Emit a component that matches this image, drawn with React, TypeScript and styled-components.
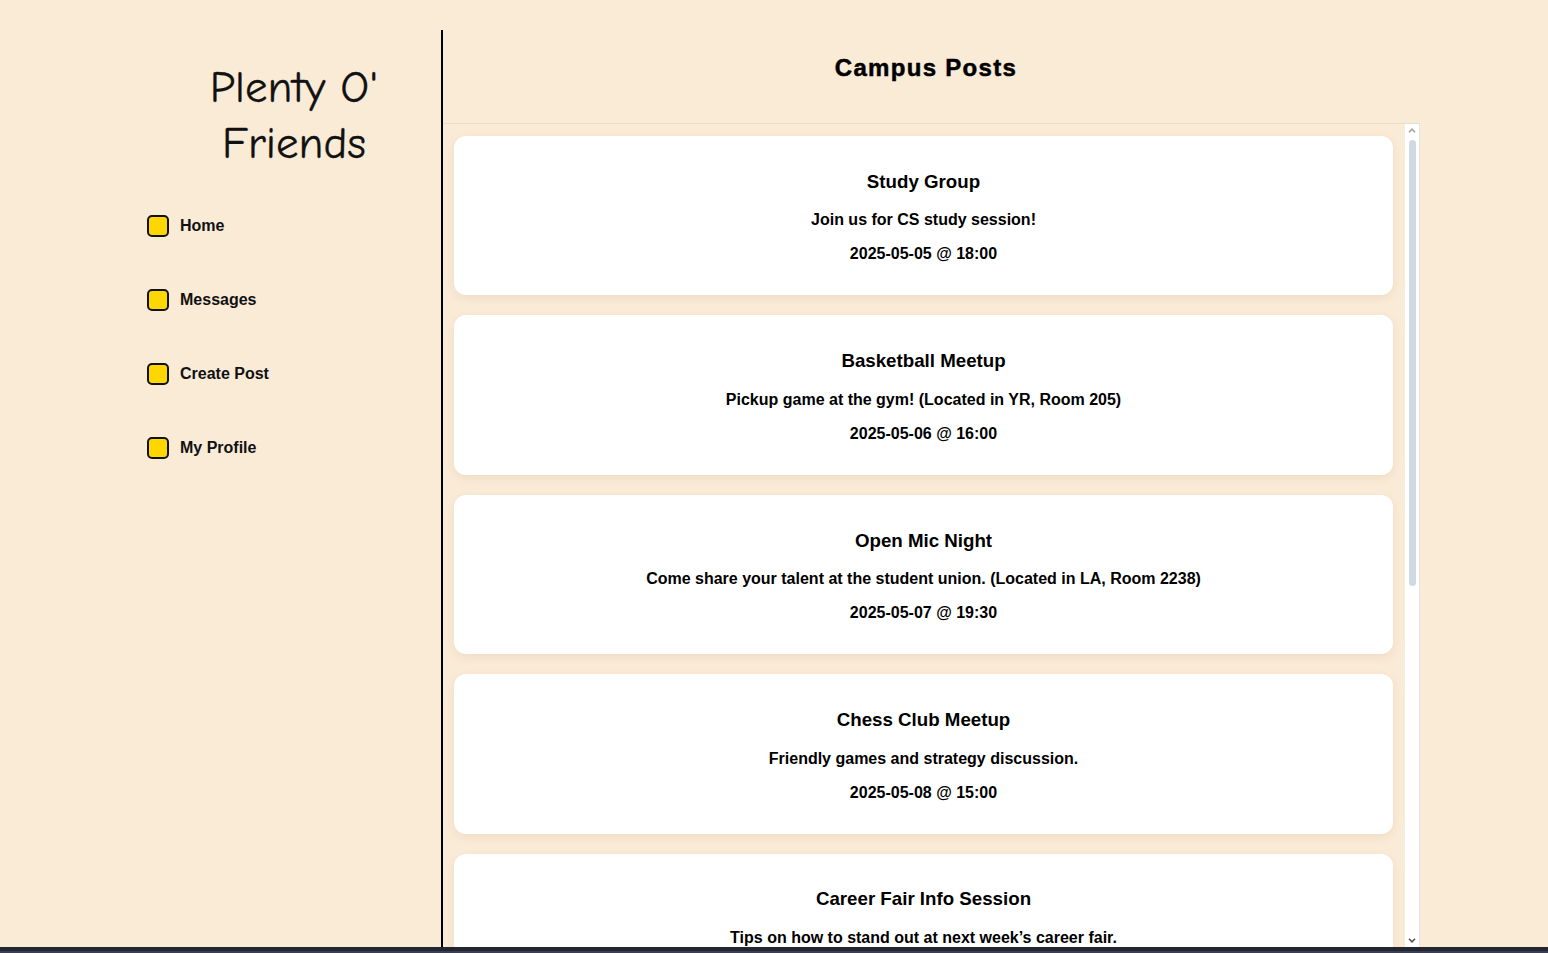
import React from "react";
import styled, { createGlobalStyle } from "styled-components";

const GlobalStyle = createGlobalStyle`
  html, body {
    margin: 0;
    padding: 0;
    height: 100%;
    overflow: hidden;
    background: #faebd7;
    font-family: "Liberation Sans", Arial, sans-serif;
    color: #000;
  }
  #root { height: 100%; }
`;

const Page = styled.div`
  height: 953px;
  display: flex;
  flex-direction: column;
`;

const Layout = styled.div`
  flex: 1;
  min-height: 0;
  display: grid;
  grid-template-columns: 443px 977px;
  padding-top: 30px;
`;

const Sidebar = styled.aside`
  border-right: 2px solid #000;
  padding-left: 147px;
  display: flex;
  flex-direction: column;
`;

const Logo = styled.h1`
  margin: 29px 0 43px;
  font-family: "Comic Sans MS", "Comic Neue", cursive;
  font-weight: 400;
  font-size: 45px;
  line-height: 56px;
  text-align: center;
  color: #111;
  -webkit-text-stroke: 0.3px #111;
`;

const Nav = styled.nav`
  display: flex;
  flex-direction: column;
  gap: 52px;
  padding-top: 1px;
`;

const NavItem = styled.a`
  display: flex;
  align-items: center;
  gap: 11px;
  height: 22px;
  font-size: 16px;
  font-weight: 700;
  color: #111;
  text-decoration: none;
  cursor: pointer;
`;

const NavIcon = styled.span`
  width: 18px;
  height: 18px;
  border: 2px solid #111;
  border-radius: 5px;
  background: #ffd700;
  flex-shrink: 0;
`;

const Main = styled.main`
  display: flex;
  flex-direction: column;
  min-height: 0;
`;

const Header = styled.header`
  height: 93px;
  padding-right: 11px;
  border-bottom: 1px solid #e2dcd3;
  display: flex;
  justify-content: center;
  align-items: flex-start;
`;

const PageTitle = styled.h2`
  margin: 24px 0 0;
  font-size: 24px;
  letter-spacing: 1.3px;
  font-weight: 900;
  -webkit-text-stroke: 0.5px #000;
  line-height: 27px;
`;

const FeedArea = styled.div`
  flex: 1;
  min-height: 0;
  display: flex;
`;

const Feed = styled.section`
  flex: 1;
  min-height: 0;
  overflow-y: scroll;
  scrollbar-width: none;
  padding: 12px 12px 12px 11px;
  &::-webkit-scrollbar {
    display: none;
  }
`;

const ScrollTrack = styled.div`
  width: 15px;
  flex-shrink: 0;
  background: #fff;
  border-right: 1px solid #e4e4e4;
  box-sizing: border-box;
  display: flex;
  flex-direction: column;
`;

const ScrollArrow = styled.div<{ $color: string }>`
  height: 13px;
  display: flex;
  align-items: center;
  justify-content: center;
  color: ${(p) => p.$color};
`;

const ScrollBody = styled.div`
  flex: 1;
  padding: 3px 3px 0 4px;
`;

const Thumb = styled.div`
  width: 7px;
  background: #cfd9e2;
  border-radius: 4px;
`;

const Card = styled.article`
  background: #fff;
  border-radius: 12px;
  box-shadow: 0 3px 10px rgba(160, 120, 60, 0.13);
  padding: 16px;
  margin-bottom: 20px;
  text-align: center;
`;

const CardTitle = styled.h3`
  margin: 18.72px 0;
  font-size: 18.72px;
  font-weight: 700;
`;

const CardText = styled.p`
  margin: 16px 0;
  font-size: 16px;
  font-weight: 700;
`;

const WindowEdge = styled.div`
  height: 6px;
  flex-shrink: 0;
  background: linear-gradient(#23252f 0 4px, #3b3d52 4px 6px);
`;

const navItems = ["Home", "Messages", "Create Post", "My Profile"];

const posts = [
  { title: "Study Group", text: "Join us for CS study session!", when: "2025-05-05 @ 18:00" },
  { title: "Basketball Meetup", text: "Pickup game at the gym! (Located in YR, Room 205)", when: "2025-05-06 @ 16:00" },
  { title: "Open Mic Night", text: "Come share your talent at the student union. (Located in LA, Room 2238)", when: "2025-05-07 @ 19:30" },
  { title: "Chess Club Meetup", text: "Friendly games and strategy discussion.", when: "2025-05-08 @ 15:00" },
  { title: "Career Fair Info Session", text: "Tips on how to stand out at next week\u2019s career fair.", when: "2025-05-09 @ 12:00" },
  { title: "Movie Night", text: "Outdoor screening on the quad. Bring a blanket!", when: "2025-05-10 @ 20:00" },
  { title: "Hiking Trip", text: "Weekend hike with the outdoors club.", when: "2025-05-11 @ 08:00" },
  { title: "Coding Hackathon", text: "Build something cool in 24 hours. (Located in ECS, Room 104)", when: "2025-05-12 @ 09:00" },
];

const Chevron = ({ up }: { up?: boolean }) => (
  <svg width="8" height="5" viewBox="0 0 8 5" fill="none">
    <path
      d={up ? "M1 4.2 L4 1.2 L7 4.2" : "M1 0.8 L4 3.8 L7 0.8"}
      stroke="currentColor"
      strokeWidth="1.6"
    />
  </svg>
);

export default function App() {
  return (
    <>
      <GlobalStyle />
      <Page>
        <Layout>
          <Sidebar>
            <Logo>
              Plenty O'
              <br />
              Friends
            </Logo>
            <Nav>
              {navItems.map((label) => (
                <NavItem key={label}>
                  <NavIcon />
                  {label}
                </NavItem>
              ))}
            </Nav>
          </Sidebar>
          <Main>
            <Header>
              <PageTitle>Campus Posts</PageTitle>
            </Header>
            <FeedArea>
              <Feed>
                {posts.map((p) => (
                  <Card key={p.title}>
                    <CardTitle>{p.title}</CardTitle>
                    <CardText>{p.text}</CardText>
                    <CardText>{p.when}</CardText>
                  </Card>
                ))}
              </Feed>
              <ScrollTrack>
                <ScrollArrow $color="#a3a3a3">
                  <Chevron up />
                </ScrollArrow>
                <ScrollBody>
                  <Thumb style={{ height: 446 }} />
                </ScrollBody>
                <ScrollArrow $color="#505050">
                  <Chevron />
                </ScrollArrow>
              </ScrollTrack>
            </FeedArea>
          </Main>
        </Layout>
        <WindowEdge />
      </Page>
    </>
  );
}
